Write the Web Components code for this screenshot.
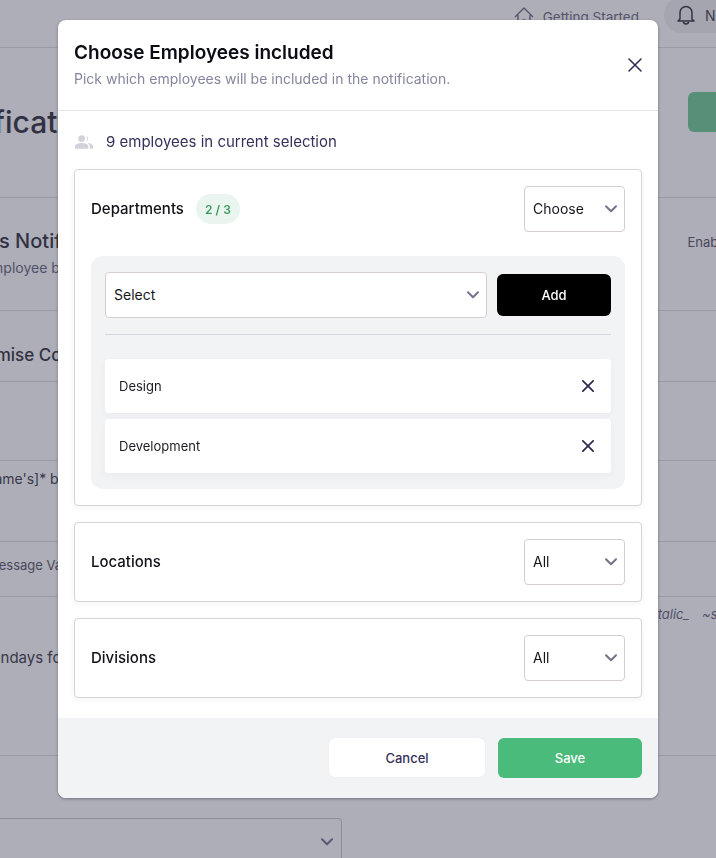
<!DOCTYPE html>
<html lang="en">
<head>
<meta charset="utf-8">
<title>Choose Employees included</title>
<style>
    html, body { margin: 0; height: 100%; }
    body { font-family: Inter, "Noto Sans", sans-serif; overflow: hidden; background: #fff; }
</style>
</head>
<body>
<page-fondo></page-fondo>
<modal-empleados titulo="Choose Employees included" subtitulo="Pick which employees will be included in the notification.">
    <resumen-seleccion>9 employees in current selection</resumen-seleccion>
    <tarjeta-filtro nombre="Departments" badge="2 / 3" valor="Choose">
        <panel-opciones>
            <fila-opcion>Design</fila-opcion>
            <fila-opcion>Development</fila-opcion>
        </panel-opciones>
    </tarjeta-filtro>
    <tarjeta-filtro nombre="Locations" valor="All"></tarjeta-filtro>
    <tarjeta-filtro nombre="Divisions" valor="All"></tarjeta-filtro>
</modal-empleados>

<script>
const CHEVRON = `<svg width="12" height="8" viewBox="0 0 12 8" fill="none" style="flex:none"><path d="M1 1.200 6 6.200l5-5" stroke="#75728c" stroke-width="2" stroke-linecap="round" stroke-linejoin="round"/></svg>`;
const CRUZ = (t, g) => `<svg width="${t}" height="${t}" viewBox="0 0 14 14" fill="none" style="flex:none"><path d="M1 1l12 12M13 1 1 13" stroke="#2e2a4f" stroke-width="${g}" stroke-linecap="round"/></svg>`;

class pageFondo extends HTMLElement {
    constructor() {
        super();
        this.attachShadow({mode: 'open'});
        this.shadowRoot.innerHTML = `
            <style>
                :host { display: block; height: 858px; overflow: hidden; color: #30303c; }
                .fila { box-sizing: border-box; border-bottom: 1px solid #dedee2; white-space: nowrap; display: flex; justify-content: space-between; }
                .barra { height: 48px; justify-content: flex-end; align-items: flex-start; margin-right: -60px; }
                .empezar { display: flex; align-items: center; gap: 9px; color: #6a6a7c; font-size: 13.500px; line-height: 16px; margin-right: 25px; padding-top: 7px; }
                .empezar svg { flex: none; }
                .avisos { display: flex; align-items: center; gap: 10px; background: #f0f0f2; border-radius: 20px 0 0 20px; height: 36px; width: 112px; box-sizing: border-box; padding-left: 13px; margin-top: -3px; font-size: 14px; color: #44444f; }
                .avisos svg { flex: none; }
                .t1 { height: 150px; padding-top: 54px; }
                .t1 span { font-size: 30px; font-weight: 500; line-height: 40px; margin-left: -65px; }
                .boton { width: 60px; height: 40px; margin-top: -10px; margin-right: -32px; background: #70cb94; border-radius: 6px; }
                .t2 { height: 113px; padding-top: 31px; }
                .t2 b { display: block; font-size: 20px; font-weight: 500; line-height: 24px; margin-left: -81px; }
                .t2 small { display: block; font-size: 14px; line-height: 20px; color: #66667a; margin: 5px 0 0 -61px; }
                .enab { font-size: 13px; color: #55555f; padding-top: 5px; margin-right: -21px; }
                .t3 { height: 71px; padding-top: 32px; font-size: 17px; font-weight: 500; line-height: 24px; }
                .t3 span { margin-left: -52px; }
                .t4 { height: 79px; }
                .t5 { height: 81px; padding-top: 8px; font-size: 14px; line-height: 20px; color: #3b3b46; }
                .t5 span { margin-left: -26px; }
                .t6 { height: 55px; padding-top: 13px; font-size: 13px; line-height: 20px; color: #55555f; }
                .t6 span { margin-left: -13px; }
                .t7 { height: 159px; padding-top: 7px; font-size: 14px; line-height: 20px; color: #3b3b46; }
                .t7 .dias { margin: 44px 0 0 -22px; font-size: 15px; }
                .t7 i { font-size: 13px; color: #66667a; word-spacing: 9px; margin-right: -37px; }
                .selector { width: 342px; height: 60px; box-sizing: border-box; margin-top: 62px; border: 1px solid #c9c9cf; border-left: 0; border-radius: 0 4px 0 0; display: flex; justify-content: flex-end; padding: 19px 8px 0 0; }
            </style>
            <div class="fila barra">
                <div class="empezar">
                    <svg width="20" height="20" viewBox="0 0 20 20" fill="none" stroke="#6a6a7c" stroke-width="1.4" stroke-linejoin="round"><path d="M1 10 10 1l9 9M4 8v11h12V8"/><path d="M8.500 13h3"/></svg>
                    <span>Getting Started</span>
                </div>
                <div class="avisos">
                    <svg width="18" height="20" viewBox="0 0 18 20" fill="none" stroke="#33333f" stroke-width="1.5" stroke-linejoin="round"><path d="M3 14V7.500a6 6 0 0 1 12 0V14l2 2H1z"/><path d="M6.500 16.500a2.500 2.500 0 0 0 5 0"/></svg>
                    <span>Notifications</span>
                </div>
            </div>
            <div class="fila t1"><span>Notifications</span><div class="boton"></div></div>
            <div class="fila t2"><div><b>Birthdays Notifications</b><small>Notify employee birthdays</small></div><div class="enab">Enabled</div></div>
            <div class="fila t3"><span>Customise Content</span></div>
            <div class="fila t4"></div>
            <div class="fila t5"><span>*[name's]* birthday</span></div>
            <div class="fila t6"><span>Message Values</span></div>
            <div class="fila t7"><span class="dias">Mondays for</span><i>_italic_ ~strike~</i></div>
            <div class="selector">${CHEVRON}</div>
        `;
    }
}

class modalEmpleados extends HTMLElement {
    constructor() {
        super();
        this.attachShadow({mode: 'open'});
        this.shadowRoot.innerHTML = `
            <style>
                :host { display: flex; justify-content: center; align-items: flex-start; position: fixed; inset: 0; padding-top: 20px; box-sizing: border-box; background: rgba(52, 52, 78, .4); }
                .caja { width: 600px; height: 778px; background: #fff; border-radius: 8px; display: flex; flex-direction: column; overflow: hidden; box-shadow: 0 1px 3px rgba(40, 40, 60, .45); }
                header { box-sizing: border-box; height: 91px; flex: none; padding: 21px 16px 0; border-bottom: 1px solid #e4e4e8; display: flex; justify-content: space-between; }
                h1 { margin: 0; font-size: 19px; line-height: 24px; font-weight: 600; color: #0c0c14; }
                p { margin: 4px 0 0; font-size: 14px; line-height: 20px; color: #85859f; }
                .cerrar { display: flex; margin-top: 17px; width: 14px; height: 14px; }
                main { flex: 1; padding: 20px 16px 0; display: flex; flex-direction: column; gap: 16px; }
                pie-modal { flex: none; }
            </style>
            <div class="caja">
                <header>
                    <div><h1 id="titulo"></h1><p id="subtitulo"></p></div>
                    <div class="cerrar">${CRUZ(14, 1.5)}</div>
                </header>
                <main><slot></slot></main>
                <pie-modal></pie-modal>
            </div>
        `;
    }

    connectedCallback() {
        this.shadowRoot.getElementById('titulo').innerText = this.getAttribute('titulo');
        this.shadowRoot.getElementById('subtitulo').innerText = this.getAttribute('subtitulo');
    }
}

class resumenSeleccion extends HTMLElement {
    constructor() {
        super();
        this.attachShadow({mode: 'open'});
        this.shadowRoot.innerHTML = `
            <style>
                :host { display: flex; align-items: center; gap: 13px; height: 22px; padding-left: 1px; font-size: 15px; color: #35305a; }
                span { margin-bottom: 2px; }
            </style>
            <svg width="18" height="14" viewBox="0 0 19 14" fill="#d2d2da"><circle cx="7" cy="3.500" r="3.500"/><path d="M0 14v-2.500C0 9.300 3.500 8 7 8s7 1.300 7 3.500V14z"/><path d="M11.500 .2a3.500 3.500 0 0 1 0 6.600 5 5 0 0 0 0-6.600zM13 8c3 .2 6 1.400 6 3.500V14h-3.500v-2.500c0-1.400-.9-2.600-2.500-3.500z"/></svg>
            <span><slot></slot></span>
        `;
    }
}

class selectorSimple extends HTMLElement {
    constructor() {
        super();
        this.attachShadow({mode: 'open'});
        this.shadowRoot.innerHTML = `
            <style>
                :host { display: flex; box-sizing: border-box; height: 46px; align-items: center; justify-content: space-between; padding: 0 7px 0 8px; background: #fff; border: 1px solid #d4cfcc; border-radius: 4px; font-size: 14px; color: #16161c; }
                span { margin-bottom: 2px; }
            </style>
            <span><slot></slot></span>${CHEVRON}
        `;
    }
}

class tarjetaFiltro extends HTMLElement {
    constructor() {
        super();
        this.attachShadow({mode: 'open'});
        this.shadowRoot.innerHTML = `
            <style>
                :host { display: block; box-sizing: border-box; border: 1px solid #d6d3da; border-radius: 4px; background: #fff; padding: 16px; box-shadow: 0 2px 6px rgba(40, 40, 60, .05); }
                .cabecera { display: flex; align-items: center; height: 46px; }
                .nombre { font-size: 15px; font-weight: 500; color: #111118; margin-bottom: 2px; }
                .badge { margin-left: 12px; width: 44px; height: 30px; border-radius: 15px; background: #e9f5ee; color: #3f9a63; font-size: 12px; font-weight: 600; display: flex; align-items: center; justify-content: center; }
                .badge:empty { display: none; }
                selector-simple { margin-left: auto; width: 101px; }
            </style>
            <div class="cabecera">
                <span class="nombre" id="nombre"></span>
                <span class="badge" id="badge"></span>
                <selector-simple id="valor"></selector-simple>
            </div>
            <slot></slot>
        `;
    }

    connectedCallback() {
        this.shadowRoot.getElementById('nombre').innerText = this.getAttribute('nombre');
        this.shadowRoot.getElementById('badge').innerText = this.getAttribute('badge') || '';
        this.shadowRoot.getElementById('valor').innerText = this.getAttribute('valor');
    }
}

class panelOpciones extends HTMLElement {
    constructor() {
        super();
        this.attachShadow({mode: 'open'});
        this.shadowRoot.innerHTML = `
            <style>
                :host { display: block; margin-top: 24px; background: #f2f3f5; border-radius: 12px; padding: 16px 14px; }
                .alta { display: flex; align-items: center; gap: 10px; padding-bottom: 16px; border-bottom: 1px solid #d6d6de; }
                selector-simple { flex: 1; }
                button { width: 114px; height: 42px; border: 0; border-radius: 6px; background: #000; color: #fff; font: 500 13px Inter, sans-serif; }
                .lista { display: flex; flex-direction: column; gap: 6px; margin-top: 24px; }
            </style>
            <div class="alta">
                <selector-simple>Select</selector-simple>
                <button type="button">Add</button>
            </div>
            <div class="lista"><slot></slot></div>
        `;
    }
}

class filaOpcion extends HTMLElement {
    constructor() {
        super();
        this.attachShadow({mode: 'open'});
        this.shadowRoot.innerHTML = `
            <style>
                :host { display: flex; align-items: center; justify-content: space-between; height: 54px; padding: 0 17px 0 14px; background: #fff; border-radius: 4px; font-size: 13px; color: #1b1b24; box-shadow: 0 3px 8px rgba(40, 40, 60, .04); }
            </style>
            <span><slot></slot></span>${CRUZ(12, 2)}
        `;
    }
}

class pieModal extends HTMLElement {
    constructor() {
        super();
        this.attachShadow({mode: 'open'});
        this.shadowRoot.innerHTML = `
            <style>
                :host { display: flex; justify-content: flex-end; gap: 13px; height: 80px; box-sizing: border-box; padding: 20px 16px; background: #f2f3f5; }
                button { height: 40px; border: 0; border-radius: 6px; font: 500 13px Inter, sans-serif; }
                .cancelar { width: 156px; height: 39px; background: #fff; color: #35305a; box-shadow: 0 0 1px rgba(40, 40, 60, .12); }
                .guardar { width: 144px; background: #4abb7a; color: #fff; }
            </style>
            <button type="button" class="cancelar">Cancel</button>
            <button type="button" class="guardar">Save</button>
        `;
    }
}

// los elementos internos primero, para que existan al montar los de fuera
window.customElements.define("selector-simple", selectorSimple);
window.customElements.define("page-fondo", pageFondo);
window.customElements.define("pie-modal", pieModal);
window.customElements.define("resumen-seleccion", resumenSeleccion);
window.customElements.define("fila-opcion", filaOpcion);
window.customElements.define("panel-opciones", panelOpciones);
window.customElements.define("tarjeta-filtro", tarjetaFiltro);
window.customElements.define("modal-empleados", modalEmpleados);
</script>
</body>
</html>
